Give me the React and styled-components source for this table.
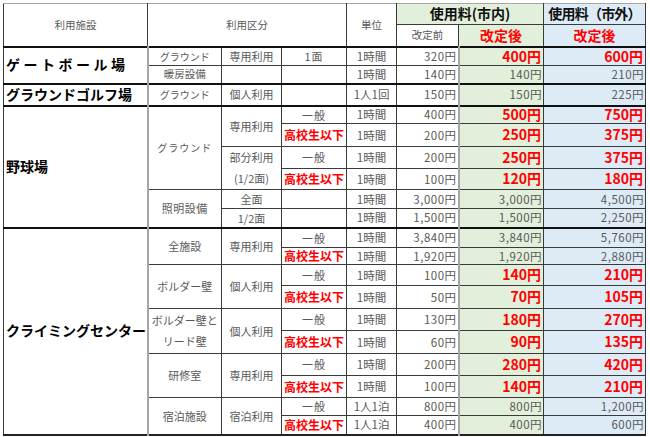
import React from "react";
import styled, { createGlobalStyle, css } from "styled-components";

const Global = createGlobalStyle`
  html, body { margin: 0; padding: 0; background: #fff; }
  body { font-family: "Noto Sans CJK JP", "Noto Sans", sans-serif; }
`;

const Page = styled.div`
  padding: 3px 0 0 3px;
`;

const Table = styled.table`
  border-collapse: collapse;
  table-layout: fixed;
  width: 642px;
  border-top: 1px solid #a6a6a6;
  border-left: 1px solid #a6a6a6;
  border-right: 1px solid #222;
  border-bottom: 2px solid #222;
`;

const Col = styled.col`
  width: ${(p) => p.$w}px;
`;

const Row = styled.tr`
  height: ${(p) => p.$h}px;
  ${(p) =>
    p.$top &&
    css`
      & > td {
        border-top: 2px solid #111;
      }
    `}
`;

const BG = { green: "#e2efda", blue: "#ddebf7", white: "#fff" };

const Cell = styled.td`
  border: 1px solid #3a3a3a;
  padding: 0 2px;
  vertical-align: middle;
  white-space: nowrap;
  overflow: visible;
  line-height: 1.1;
  background: ${(p) => BG[p.$bg || "white"]};
`;

const HeadLabel = styled(Cell)`
  text-align: center;
  color: #595959;
  font-size: 10.5px;
  border-top-color: #a6a6a6;
`;

const HeadTitle = styled(Cell)`
  text-align: center;
  color: #111;
  font-weight: 700;
  font-size: ${(p) => p.$size || 14}px;
  letter-spacing: ${(p) => p.$ls || 0}px;
  border-top-color: #a6a6a6;
`;

const HeadRed = styled(Cell)`
  text-align: center;
  color: #ff0000;
  font-weight: 700;
  font-size: 14px;
`;

const NameCell = styled(Cell)`
  text-align: left;
  color: #000;
  font-weight: 700;
  font-size: 14px;
  padding-left: 2px;
  letter-spacing: ${(p) => p.$ls || 0}px;
  border-right: 2px solid #a6a6a6;
`;

const SubCell = styled(Cell)`
  text-align: center;
  color: #595959;
  font-size: ${(p) => p.$size || 11}px;
  letter-spacing: ${(p) => p.$ls || 0}px;
  line-height: ${(p) => (p.$tall ? 1.9 : 1.1)};
`;

const KindCell = styled(Cell)`
  text-align: center;
  color: ${(p) => (p.$red ? "#ff0000" : "#595959")};
  font-weight: ${(p) => (p.$red ? 700 : 400)};
  font-size: ${(p) => (p.$red ? 12 : 11)}px;
  letter-spacing: ${(p) => (p.$red ? 0 : 1)}px;
  padding: 0;
`;

const NumCell = styled(Cell)`
  text-align: right;
  color: #595959;
  font-size: 11.5px;
  letter-spacing: 0.5px;
  padding-right: 1px;
  ${(p) =>
    p.$old &&
    css`
      border-right: 2px solid #a6a6a6;
    `}
`;

const NewCell = styled(Cell)`
  text-align: right;
  color: #ff0000;
  font-weight: 700;
  font-size: 14px;
  padding-right: 2px;
`;

const UnitCell = styled(Cell)`
  text-align: center;
  color: #595959;
  font-size: 11.5px;
`;

function Prices({ old, inner, outer, red }) {
  return (
    <>
      <NumCell $old>{old}</NumCell>
      {red ? (
        <>
          <NewCell $bg="green">{inner}</NewCell>
          <NewCell $bg="blue">{outer}</NewCell>
        </>
      ) : (
        <>
          <NumCell $bg="green">{inner}</NumCell>
          <NumCell $bg="blue">{outer}</NumCell>
        </>
      )}
    </>
  );
}

export default function App() {
  return (
    <Page>
      <Global />
      <Table>
        <colgroup>
          <Col $w={144} />
          <Col $w={74} />
          <Col $w={60} />
          <Col $w={65} />
          <Col $w={50} />
          <Col $w={62} />
          <Col $w={85} />
          <Col $w={102} />
        </colgroup>
        <tbody>
          <Row $h={21}>
            <HeadLabel rowSpan={2}>利用施設</HeadLabel>
            <HeadLabel rowSpan={2} colSpan={3}>利用区分</HeadLabel>
            <HeadLabel rowSpan={2}>単位</HeadLabel>
            <HeadTitle colSpan={2} $bg="green">使用料(市内)</HeadTitle>
            <HeadTitle $bg="blue" $size={14} $ls={-0.8}>使用料（市外）</HeadTitle>
          </Row>
          <Row $h={22}>
            <HeadLabel>改定前</HeadLabel>
            <HeadRed $bg="green">改定後</HeadRed>
            <HeadRed $bg="blue">改定後</HeadRed>
          </Row>

          <Row $h={19} $top>
            <NameCell rowSpan={2} $ls={3.5}>ゲートボール場</NameCell>
            <SubCell $size={10}>グラウンド</SubCell>
            <SubCell>専用利用</SubCell>
            <KindCell>1面</KindCell>
            <UnitCell>1時間</UnitCell>
            <Prices old="320円" inner="400円" outer="600円" red />
          </Row>
          <Row $h={18}>
            <SubCell $size={10.5}>暖房設備</SubCell>
            <SubCell />
            <KindCell />
            <UnitCell>1時間</UnitCell>
            <Prices old="140円" inner="140円" outer="210円" />
          </Row>

          <Row $h={22} $top>
            <NameCell>グラウンドゴルフ場</NameCell>
            <SubCell $size={10}>グラウンド</SubCell>
            <SubCell>個人利用</SubCell>
            <KindCell />
            <UnitCell>1人1回</UnitCell>
            <Prices old="150円" inner="150円" outer="225円" />
          </Row>

          <Row $h={18} $top>
            <NameCell rowSpan={6}>野球場</NameCell>
            <SubCell rowSpan={4} $size={10} $ls={1}>グラウンド</SubCell>
            <SubCell rowSpan={2}>専用利用</SubCell>
            <KindCell>一般</KindCell>
            <UnitCell>1時間</UnitCell>
            <Prices old="400円" inner="500円" outer="750円" red />
          </Row>
          <Row $h={23}>
            <KindCell $red>高校生以下</KindCell>
            <UnitCell>1時間</UnitCell>
            <Prices old="200円" inner="250円" outer="375円" red />
          </Row>
          <Row $h={22}>
            <SubCell rowSpan={2} $tall>
              部分利用
              <br />
              (1/2面)
            </SubCell>
            <KindCell>一般</KindCell>
            <UnitCell>1時間</UnitCell>
            <Prices old="200円" inner="250円" outer="375円" red />
          </Row>
          <Row $h={21}>
            <KindCell $red>高校生以下</KindCell>
            <UnitCell>1時間</UnitCell>
            <Prices old="100円" inner="120円" outer="180円" red />
          </Row>
          <Row $h={19}>
            <SubCell rowSpan={2} $ls={0.5}>照明設備</SubCell>
            <SubCell>全面</SubCell>
            <KindCell />
            <UnitCell>1時間</UnitCell>
            <Prices old="3,000円" inner="3,000円" outer="4,500円" />
          </Row>
          <Row $h={19}>
            <SubCell>1/2面</SubCell>
            <KindCell />
            <UnitCell>1時間</UnitCell>
            <Prices old="1,500円" inner="1,500円" outer="2,250円" />
          </Row>

          <Row $h={20} $top>
            <NameCell rowSpan={10}>クライミングセンター</NameCell>
            <SubCell rowSpan={2}>全施設</SubCell>
            <SubCell rowSpan={2}>専用利用</SubCell>
            <KindCell>一般</KindCell>
            <UnitCell>1時間</UnitCell>
            <Prices old="3,840円" inner="3,840円" outer="5,760円" />
          </Row>
          <Row $h={17}>
            <KindCell $red>高校生以下</KindCell>
            <UnitCell>1時間</UnitCell>
            <Prices old="1,920円" inner="1,920円" outer="2,880円" />
          </Row>
          <Row $h={21}>
            <SubCell rowSpan={2}>ボルダー壁</SubCell>
            <SubCell rowSpan={2}>個人利用</SubCell>
            <KindCell>一般</KindCell>
            <UnitCell>1時間</UnitCell>
            <Prices old="100円" inner="140円" outer="210円" red />
          </Row>
          <Row $h={23}>
            <KindCell $red>高校生以下</KindCell>
            <UnitCell>1時間</UnitCell>
            <Prices old="50円" inner="70円" outer="105円" red />
          </Row>
          <Row $h={22}>
            <SubCell rowSpan={2} $tall>
              ボルダー壁と
              <br />
              リード壁
            </SubCell>
            <SubCell rowSpan={2}>個人利用</SubCell>
            <KindCell>一般</KindCell>
            <UnitCell>1時間</UnitCell>
            <Prices old="130円" inner="180円" outer="270円" red />
          </Row>
          <Row $h={23}>
            <KindCell $red>高校生以下</KindCell>
            <UnitCell>1時間</UnitCell>
            <Prices old="60円" inner="90円" outer="135円" red />
          </Row>
          <Row $h={22}>
            <SubCell rowSpan={2}>研修室</SubCell>
            <SubCell rowSpan={2}>専用利用</SubCell>
            <KindCell>一般</KindCell>
            <UnitCell>1時間</UnitCell>
            <Prices old="200円" inner="280円" outer="420円" red />
          </Row>
          <Row $h={22}>
            <KindCell $red>高校生以下</KindCell>
            <UnitCell>1時間</UnitCell>
            <Prices old="100円" inner="140円" outer="210円" red />
          </Row>
          <Row $h={18}>
            <SubCell rowSpan={2}>宿泊施設</SubCell>
            <SubCell rowSpan={2}>宿泊利用</SubCell>
            <KindCell>一般</KindCell>
            <UnitCell>1人1泊</UnitCell>
            <Prices old="800円" inner="800円" outer="1,200円" />
          </Row>
          <Row $h={19}>
            <KindCell $red>高校生以下</KindCell>
            <UnitCell>1人1泊</UnitCell>
            <Prices old="400円" inner="400円" outer="600円" />
          </Row>
        </tbody>
      </Table>
    </Page>
  );
}
